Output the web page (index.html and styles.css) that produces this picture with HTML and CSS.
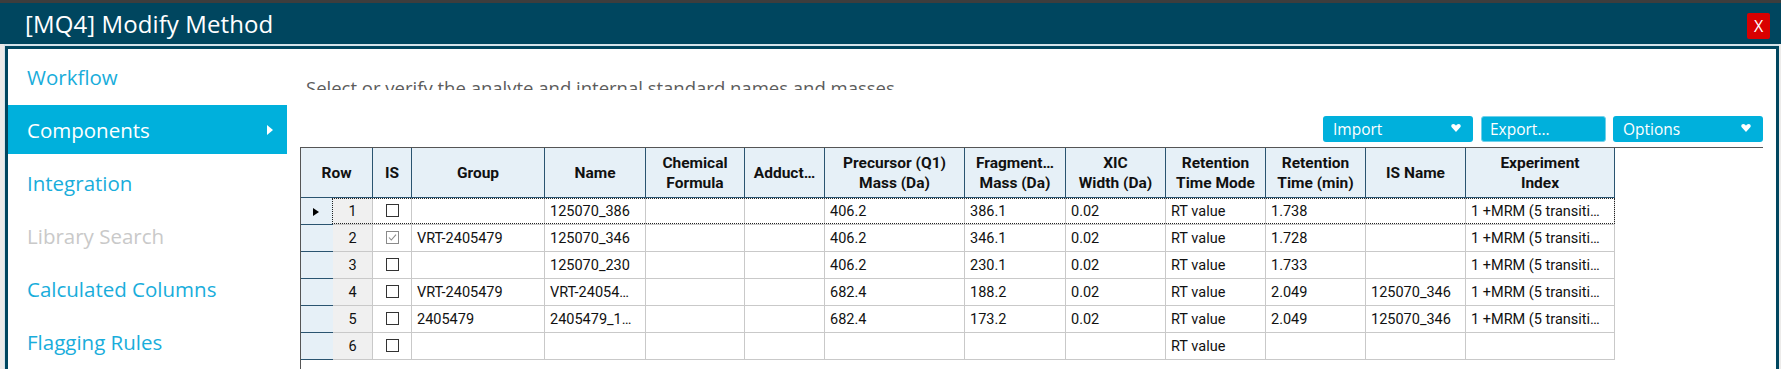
FILE: index.html
```html
<!DOCTYPE html>
<html lang="en">
  <head>
    <meta charset="UTF-8" />
    <meta name="viewport" content="width=device-width, initial-scale=1.0" />
    <title>[MQ4] Modify Method</title>
    <link rel="stylesheet" href="styles.css">
  </head>
  <body>
    <div class="window">
      <div class="titlebar">
        <h1>[MQ4] Modify Method</h1>
        <button class="close">X</button>
      </div>

      <div class="frame">
        <div class="client">
          <ul class="nav">
            <li>Workflow</li>
            <li class="active">Components<span class="arrow"></span></li>
            <li>Integration</li>
            <li class="disabled">Library Search</li>
            <li>Calculated Columns</li>
            <li>Flagging Rules</li>
          </ul>

          <div class="main">
            <div class="intro">
              <p>Select or verify the analyte and internal standard names and masses.</p>
            </div>

            <div class="toolbar">
              <button class="btn btn-wide">Import
                <svg class="caret" width="10" height="8" viewBox="0 0 11 9"><path d="M5.5 9 L0.7 3.6 C-0.5 2 0.5 0 2.5 0 C3.9 0 4.8 0.9 5.5 2 C6.2 0.9 7.1 0 8.5 0 C10.5 0 11.5 2 10.3 3.6 Z" fill="#fff"/></svg>
              </button>
              <button class="btn btn-export">Export...</button>
              <button class="btn btn-wide">Options
                <svg class="caret" width="10" height="8" viewBox="0 0 11 9"><path d="M5.5 9 L0.7 3.6 C-0.5 2 0.5 0 2.5 0 C3.9 0 4.8 0.9 5.5 2 C6.2 0.9 7.1 0 8.5 0 C10.5 0 11.5 2 10.3 3.6 Z" fill="#fff"/></svg>
              </button>
            </div>

            <div class="grid">
              <table>
                <colgroup>
                  <col style="width: 32px" />
                  <col style="width: 40px" />
                  <col style="width: 39px" />
                  <col style="width: 133px" />
                  <col style="width: 101px" />
                  <col style="width: 99px" />
                  <col style="width: 80px" />
                  <col style="width: 140px" />
                  <col style="width: 101px" />
                  <col style="width: 100px" />
                  <col style="width: 100px" />
                  <col style="width: 100px" />
                  <col style="width: 100px" />
                  <col style="width: 149px" />
                </colgroup>
                <thead>
                  <tr>
                    <th colspan="2">Row</th>
                    <th>IS</th>
                    <th>Group</th>
                    <th>Name</th>
                    <th>Chemical<br />Formula</th>
                    <th>Adduct…</th>
                    <th>Precursor (Q1)<br />Mass (Da)</th>
                    <th>Fragment…<br />Mass (Da)</th>
                    <th>XIC<br />Width (Da)</th>
                    <th>Retention<br />Time Mode</th>
                    <th>Retention<br />Time (min)</th>
                    <th>IS Name</th>
                    <th>Experiment<br />Index</th>
                  </tr>
                </thead>
                <tbody id="rows"></tbody>
              </table>
              <div class="focus-rect"></div>
            </div>
          </div>
        </div>
      </div>
    </div>

    <script>
      const rows = [
        ["1", false, "", "125070_386", "", "", "406.2", "386.1", "0.02", "RT value", "1.738", "", "1 +MRM (5 transiti…"],
        ["2", true, "VRT-2405479", "125070_346", "", "", "406.2", "346.1", "0.02", "RT value", "1.728", "", "1 +MRM (5 transiti…"],
        ["3", false, "", "125070_230", "", "", "406.2", "230.1", "0.02", "RT value", "1.733", "", "1 +MRM (5 transiti…"],
        ["4", false, "VRT-2405479", "VRT-24054…", "", "", "682.4", "188.2", "0.02", "RT value", "2.049", "125070_346", "1 +MRM (5 transiti…"],
        ["5", false, "2405479", "2405479_1…", "", "", "682.4", "173.2", "0.02", "RT value", "2.049", "125070_346", "1 +MRM (5 transiti…"],
        ["6", false, "", "", "", "", "", "", "", "RT value", "", "", ""],
      ];

      const checkSvg =
        '<svg width="13" height="13" viewBox="0 0 13 13"><path d="M3 6.5 L5.3 9 L10 3.6" fill="none" stroke="#8a8a8a" stroke-width="1.1"/></svg>';

      const tbody = document.getElementById("rows");
      rows.forEach((r, i) => {
        const tr = document.createElement("tr");
        const marker = i === 0 ? '<span class="marker"></span>' : "";
        let html = `<td class="selector">${marker}</td>`;
        html += `<td class="num">${r[0]}</td>`;
        html += `<td class="check"><span class="box ${r[1] ? "checked" : ""}">${r[1] ? checkSvg : ""}</span></td>`;
        r.slice(2).forEach((v) => {
          html += `<td>${v}</td>`;
        });
        tr.innerHTML = html;
        tbody.appendChild(tr);
      });
    </script>
  </body>
</html>
```

FILE: styles.css
```css
* {
  margin: 0;
  padding: 0;
  box-sizing: border-box;
}
body {
  font-family: "Open Sans", "Noto Sans", sans-serif;
  background: #ecebea;
  width: 1781px;
  height: 369px;
  overflow: hidden;
  border-top: 3px solid #3d3d3d;
}
.titlebar {
  height: 41px;
  background: #00465f;
  display: flex;
  align-items: center;
  justify-content: space-between;
  padding-left: 25px;
  padding-right: 11px;
}
.titlebar h1 {
  color: #fff;
  font-size: 24px;
  font-weight: 400;
  letter-spacing: 0.1px;
}
.close {
  width: 23px;
  height: 26px;
  background: #d90000;
  color: #fff;
  border: none;
  border-radius: 2px;
  font-family: "Open Sans", sans-serif;
  font-size: 16px;
  margin-top: 5px;
}
.frame {
  margin-left: 4px;
  margin-right: 2px;
  border-top: 2px solid #d3e3ea;
  border-left: 1px solid #d3e3ea;
  height: 325px;
}
.client {
  height: 100%;
  background: #fff;
  border: 3px solid #00465f;
  border-bottom: none;
  display: flex;
}
.nav {
  list-style: none;
  width: 279px;
  margin-right: 13px;
  padding-top: 3px;
  display: flex;
  flex-direction: column;
  gap: 4px;
}
.nav li {
  height: 49px;
  display: flex;
  align-items: center;
  padding-left: 19px;
  font-size: 20.5px;
  color: #19addb;
  position: relative;
}
.nav li.active {
  background: #00b0dc;
  color: #fff;
}
.nav li.disabled {
  color: #c9c9c9;
}
.arrow {
  position: absolute;
  right: 14px;
  top: 20px;
  border-left: 6px solid #fff;
  border-top: 5px solid transparent;
  border-bottom: 5px solid transparent;
}
.main {
  flex: 1;
  margin-right: 13px;
  padding-top: 25px;
  display: flex;
  flex-direction: column;
}
.intro {
  height: 16px;
  overflow: hidden;
  padding-left: 6px;
}
.intro p {
  font-size: 18.5px;
  line-height: 26px;
  padding-top: 1px;
  color: #5c5c5c;
}
.toolbar {
  margin-top: 26px;
  display: flex;
  justify-content: flex-end;
  gap: 7px;
}
.btn {
  height: 26px;
  background: #00b0dc;
  color: #fff;
  border: none;
  border-radius: 3px;
  font-family: "Open Sans", sans-serif;
  font-size: 15.5px;
  text-align: left;
  padding-left: 10px;
  display: flex;
  align-items: center;
  justify-content: space-between;
  padding-right: 12px;
}
.btn-wide {
  width: 150px;
}
.btn-export {
  width: 125px;
  border: 1px solid #6fd0ea;
  padding-left: 8px;
  margin-left: 1px;
}
.caret {
  margin-top: -2px;
}
.grid {
  margin-top: 5px;
  flex: 1;
  border-top: 1px solid #555;
  border-left: 1px solid #555;
  position: relative;
}
table {
  table-layout: fixed;
  border-collapse: separate;
  border-spacing: 0;
  width: 1314px;
  font-family: Roboto, "Noto Sans", sans-serif;
}
th {
  height: 50px;
  background: #e6f0f7;
  border-right: 1px solid #2a5470;
  border-bottom: 1px solid #2a5470;
  font-size: 15.5px;
  font-weight: 700;
  line-height: 20px;
  color: #111;
  text-align: center;
  white-space: nowrap;
  overflow: hidden;
}
td {
  height: 27px;
  border-right: 1px solid #c9c9c9;
  border-bottom: 1px solid #c9c9c9;
  font-size: 14.5px;
  color: #111;
  padding-left: 5px;
  white-space: nowrap;
  overflow: hidden;
}
td.selector {
  background: #e6f0f7;
  border-right: none;
  border-bottom: 1px solid #2a5470;
  padding-left: 12px;
}
td.num {
  background: #f0f0f0;
  text-align: center;
  padding-left: 0;
}
td.check {
  text-align: center;
  padding-left: 0;
}
.box {
  display: inline-block;
  width: 13px;
  height: 13px;
  border: 1px solid #333;
  vertical-align: middle;
  margin-top: -2px;
}
.box.checked {
  border-color: #8a8a8a;
}
.box svg {
  display: block;
  margin: -1px 0 0 -1px;
}
.marker {
  display: inline-block;
  border-left: 6px solid #000;
  border-top: 4px solid transparent;
  border-bottom: 4px solid transparent;
  vertical-align: middle;
}
.focus-rect {
  position: absolute;
  left: 31px;
  top: 50px;
  width: 1283px;
  height: 26px;
  border: 1px dotted #222;
  pointer-events: none;
}
```
